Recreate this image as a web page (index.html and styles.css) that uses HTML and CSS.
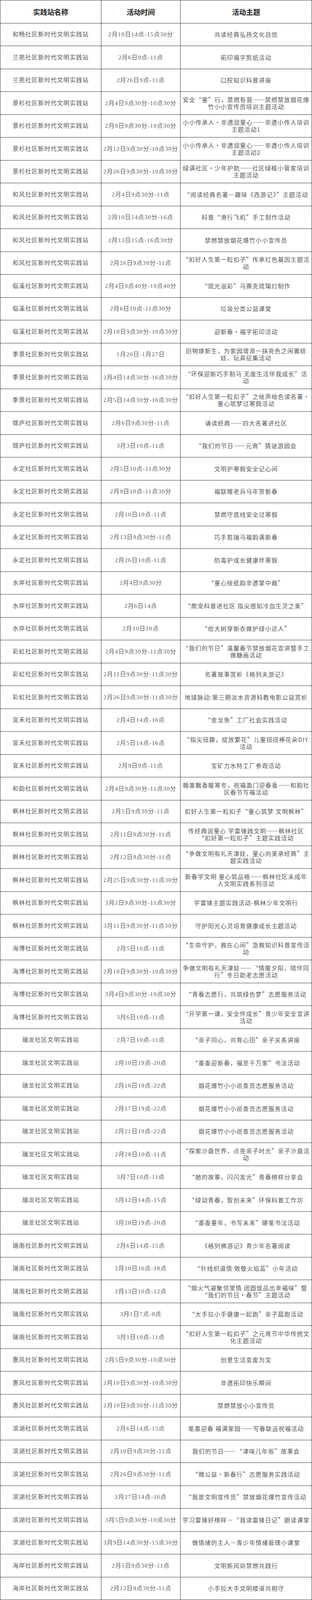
FILE: index.html
```html
<!DOCTYPE html>
<html lang="zh-CN">
<head>
<meta charset="utf-8">
<title>新时代文明实践站活动安排</title>
<link rel="stylesheet" href="styles.css">
</head>
<body>
<div class="schedule" role="table">
<div class="row" role="row"><div class="cell head" role="columnheader">实践站名称</div><div class="cell head" role="columnheader">活动时间</div><div class="cell head" role="columnheader">活动主题</div></div>
<div class="row" role="row"><div class="cell name" role="cell">和畅社区新时代文明实践站</div><div class="cell time" role="cell">2月10日14点-15点30分</div><div class="cell topic" role="cell">共读经典弘扬文化自信</div></div>
<div class="row" role="row"><div class="cell name" role="cell">兰苑社区新时代文明实践站</div><div class="cell time" role="cell">2月6日9点-11点</div><div class="cell topic" role="cell">拓印福字剪纸活动</div></div>
<div class="row" role="row"><div class="cell name" role="cell">兰苑社区新时代文明实践站</div><div class="cell time" role="cell">2月26日9点-11点</div><div class="cell topic" role="cell">口腔知识科普讲座</div></div>
<div class="row" role="row"><div class="cell name" role="cell">景杉社区新时代文明实践站</div><div class="cell time" role="cell">2月4日9点30分-10点30分</div><div class="cell topic" role="cell">安全“童”行，禁燃有我——禁燃禁放烟花爆竹小小宣传员培训主题活动</div></div>
<div class="row" role="row"><div class="cell name" role="cell">景杉社区新时代文明实践站</div><div class="cell time" role="cell">2月9日9点30分-10点30分</div><div class="cell topic" role="cell">小小传承人·非遗润童心——非遗小传人培训主题活动1</div></div>
<div class="row" role="row"><div class="cell name" role="cell">景杉社区新时代文明实践站</div><div class="cell time" role="cell">2月12日9点30分-10点30分</div><div class="cell topic" role="cell">小小传承人·非遗润童心——非遗小传人培训主题活动2</div></div>
<div class="row" role="row"><div class="cell name" role="cell">景杉社区新时代文明实践站</div><div class="cell time" role="cell">2月26日9点30分-10点30分</div><div class="cell topic" role="cell">绿满社区·少年护航——社区绿植小管家培训主题活动</div></div>
<div class="row" role="row"><div class="cell name" role="cell">和风社区新时代文明实践站</div><div class="cell time" role="cell">2月4日9点30分-11点</div><div class="cell topic" role="cell">“阅读经典名著—趣味《西游记》”主题活动</div></div>
<div class="row" role="row"><div class="cell name" role="cell">和风社区新时代文明实践站</div><div class="cell time" role="cell">2月10日14点30分-16点</div><div class="cell topic" role="cell">科普“滑行飞机”手工制作活动</div></div>
<div class="row" role="row"><div class="cell name" role="cell">和风社区新时代文明实践站</div><div class="cell time" role="cell">2月13日15点-16点30分</div><div class="cell topic" role="cell">禁燃禁放烟花爆竹小小宣传员</div></div>
<div class="row" role="row"><div class="cell name" role="cell">和风社区新时代文明实践站</div><div class="cell time" role="cell">2月26日9点30分-11点</div><div class="cell topic" role="cell">“扣好人生第一粒扣子”传承红色基因主题活动</div></div>
<div class="row" role="row"><div class="cell name" role="cell">临溪社区新时代文明实践站</div><div class="cell time" role="cell">2月4日9点40分-10点40分</div><div class="cell topic" role="cell">“琉光溢彩”马赛克琉璃灯制作</div></div>
<div class="row" role="row"><div class="cell name" role="cell">临溪社区新时代文明实践站</div><div class="cell time" role="cell">2月6日10点-11点30分</div><div class="cell topic" role="cell">垃圾分类公益课堂</div></div>
<div class="row" role="row"><div class="cell name" role="cell">临溪社区新时代文明实践站</div><div class="cell time" role="cell">2月10日9点30分-10点30分</div><div class="cell topic" role="cell">迎新春·福字拓印活动</div></div>
<div class="row" role="row"><div class="cell name" role="cell">季景社区新时代文明实践站</div><div class="cell time" role="cell">1月20日-1月27日</div><div class="cell topic" role="cell">旧物焕新生，为家园增添一抹亮色之闲置娃娃、玩具征集活动</div></div>
<div class="row" role="row"><div class="cell name" role="cell">季景社区新时代文明实践站</div><div class="cell time" role="cell">2月4日14点30分-16点30分</div><div class="cell topic" role="cell">“环保迎新巧手制马 无废生活伴我成长”活动</div></div>
<div class="row" role="row"><div class="cell name" role="cell">季景社区新时代文明实践站</div><div class="cell time" role="cell">2月5日14点30分-16点30分</div><div class="cell topic" role="cell">“扣好人生第一粒扣子”之绘声绘色读名著·童心筑梦过寒假活动</div></div>
<div class="row" role="row"><div class="cell name" role="cell">锦庐社区新时代文明实践站</div><div class="cell time" role="cell">2月6日9点30分-11点</div><div class="cell topic" role="cell">诵读经典——四大名著进社区</div></div>
<div class="row" role="row"><div class="cell name" role="cell">锦庐社区新时代文明实践站</div><div class="cell time" role="cell">3月3日10点-11点</div><div class="cell topic" role="cell">“我们的节日——元宵”猜谜游园会</div></div>
<div class="row" role="row"><div class="cell name" role="cell">永定社区新时代文明实践站</div><div class="cell time" role="cell">2月5日10点-11点30分</div><div class="cell topic" role="cell">文明护寒假安全记心间</div></div>
<div class="row" role="row"><div class="cell name" role="cell">永定社区新时代文明实践站</div><div class="cell time" role="cell">2月9日10点-11点30分</div><div class="cell topic" role="cell">福联赠老兵马年贺新春</div></div>
<div class="row" role="row"><div class="cell name" role="cell">永定社区新时代文明实践站</div><div class="cell time" role="cell">2月10日10点-11点</div><div class="cell topic" role="cell">禁燃守底线安全过寒假</div></div>
<div class="row" role="row"><div class="cell name" role="cell">永定社区新时代文明实践站</div><div class="cell time" role="cell">2月13日9点30分-11点</div><div class="cell topic" role="cell">巧手剪瑞马福韵满新春</div></div>
<div class="row" role="row"><div class="cell name" role="cell">永定社区新时代文明实践站</div><div class="cell time" role="cell">2月26日10点-11点</div><div class="cell topic" role="cell">防毒护成长健康伴寒假</div></div>
<div class="row" role="row"><div class="cell name" role="cell">水岸社区新时代文明实践站</div><div class="cell time" role="cell">2月4日9点30分</div><div class="cell topic" role="cell">“童心绘纸韵非遗掌中裁”</div></div>
<div class="row" role="row"><div class="cell name" role="cell">水岸社区新时代文明实践站</div><div class="cell time" role="cell">2月6日14点</div><div class="cell topic" role="cell">“爬宠科普进社区 指尖感知冷血生灵之美”</div></div>
<div class="row" role="row"><div class="cell name" role="cell">水岸社区新时代文明实践站</div><div class="cell time" role="cell">2月10日10点</div><div class="cell topic" role="cell">“给大树穿新衣做护绿小达人”</div></div>
<div class="row" role="row"><div class="cell name" role="cell">彩虹社区新时代文明实践站</div><div class="cell time" role="cell">2月4日9点30分-11点30分</div><div class="cell topic" role="cell">“我们的节日”温馨春节禁放烟花宣讲暨手工做糖画活动</div></div>
<div class="row" role="row"><div class="cell name" role="cell">彩虹社区新时代文明实践站</div><div class="cell time" role="cell">2月11日9点30分-11点30分</div><div class="cell topic" role="cell">名著故事赏析《格列夫游记》</div></div>
<div class="row" role="row"><div class="cell name" role="cell">彩虹社区新时代文明实践站</div><div class="cell time" role="cell">2月26日9点30分-11点30分</div><div class="cell topic" role="cell">地球脉动:第三期淡水资源科教电影公益赏析</div></div>
<div class="row" role="row"><div class="cell name" role="cell">宜禾社区新时代文明实践站</div><div class="cell time" role="cell">2月4日14点-16点</div><div class="cell topic" role="cell">“金龙鱼”工厂社会实践活动</div></div>
<div class="row" role="row"><div class="cell name" role="cell">宜禾社区新时代文明实践站</div><div class="cell time" role="cell">2月5日14点-16点</div><div class="cell topic" role="cell">“指尖扭趣，绽放繁花”儿童扭扭棒花朵DIY活动</div></div>
<div class="row" role="row"><div class="cell name" role="cell">宜禾社区新时代文明实践站</div><div class="cell time" role="cell">2月9日9点-11点</div><div class="cell topic" role="cell">宝矿力水特工厂参观活动</div></div>
<div class="row" role="row"><div class="cell name" role="cell">和韵社区新时代文明实践站</div><div class="cell time" role="cell">2月4日9点30分-11点30分</div><div class="cell topic" role="cell">翰墨飘香暖寒冬，祝福盈门迎春香——和韵社区春节写福活动</div></div>
<div class="row" role="row"><div class="cell name" role="cell">枫林社区新时代文明实践站</div><div class="cell time" role="cell">2月5日9点30分-11点</div><div class="cell topic" role="cell">扣好人生第一粒扣子“童心筑梦 文明枫林”</div></div>
<div class="row" role="row"><div class="cell name" role="cell">枫林社区新时代文明实践站</div><div class="cell time" role="cell">2月11日9点30分-11点</div><div class="cell topic" role="cell">传经典润童心 学雷锋践文明——枫林社区“扣好第一粒扣子”主题实践活动</div></div>
<div class="row" role="row"><div class="cell name" role="cell">枫林社区新时代文明实践站</div><div class="cell time" role="cell">2月12日9点30分-11点</div><div class="cell topic" role="cell">“争做文明有礼天津娃，童心向美承经典”主题实践活动</div></div>
<div class="row" role="row"><div class="cell name" role="cell">枫林社区新时代文明实践站</div><div class="cell time" role="cell">2月25日9点30分-11点30分</div><div class="cell topic" role="cell">新春学文明 童心筑品格——枫林社区未成年人文明实践系列活动</div></div>
<div class="row" role="row"><div class="cell name" role="cell">枫林社区新时代文明实践站</div><div class="cell time" role="cell">3月2日9点30分-11点30分</div><div class="cell topic" role="cell">学雷锋主题实践活动-枫林少年文明行</div></div>
<div class="row" role="row"><div class="cell name" role="cell">枫林社区新时代文明实践站</div><div class="cell time" role="cell">3月11日9点30分-11点30分</div><div class="cell topic" role="cell">守护阳光心灵培育健康成长主题活动</div></div>
<div class="row" role="row"><div class="cell name" role="cell">海博社区新时代文明实践站</div><div class="cell time" role="cell">2月5日10点-11点</div><div class="cell topic" role="cell">“生命守护，救在心间”急救知识科普宣传活动</div></div>
<div class="row" role="row"><div class="cell name" role="cell">海博社区新时代文明实践站</div><div class="cell time" role="cell">2月10日9点30分-10点30分</div><div class="cell topic" role="cell">争做文明有礼天津娃——“情暖夕阳，陪伴同行”冬日助老志愿活动</div></div>
<div class="row" role="row"><div class="cell name" role="cell">海博社区新时代文明实践站</div><div class="cell time" role="cell">3月4日9点30分-10点30分</div><div class="cell topic" role="cell">“青春志愿行，共筑绿色梦”志愿服务活动</div></div>
<div class="row" role="row"><div class="cell name" role="cell">海博社区新时代文明实践站</div><div class="cell time" role="cell">3月6日10点-11点</div><div class="cell topic" role="cell">“开学第一课，安全伴成长”青少年安全宣讲活动</div></div>
<div class="row" role="row"><div class="cell name" role="cell">瑞龙社区文明实践站</div><div class="cell time" role="cell">2月7日10点-11点</div><div class="cell topic" role="cell">“亲子同心，共育心田”亲子关系讲座</div></div>
<div class="row" role="row"><div class="cell name" role="cell">瑞龙社区文明实践站</div><div class="cell time" role="cell">2月10日19点-20点</div><div class="cell topic" role="cell">“墨香迎新春，福至千万家”书法活动</div></div>
<div class="row" role="row"><div class="cell name" role="cell">瑞龙社区文明实践站</div><div class="cell time" role="cell">2月16日19点-22点</div><div class="cell topic" role="cell">烟花爆竹小小巡查员志愿服务活动</div></div>
<div class="row" role="row"><div class="cell name" role="cell">瑞龙社区文明实践站</div><div class="cell time" role="cell">2月17日19点-22点</div><div class="cell topic" role="cell">烟花爆竹小小巡查员志愿服务活动</div></div>
<div class="row" role="row"><div class="cell name" role="cell">瑞龙社区文明实践站</div><div class="cell time" role="cell">2月21日19点-22点</div><div class="cell topic" role="cell">烟花爆竹小小巡查员志愿服务活动</div></div>
<div class="row" role="row"><div class="cell name" role="cell">瑞龙社区文明实践站</div><div class="cell time" role="cell">2月28日10点-11点</div><div class="cell topic" role="cell">“探索沙盘世界，点亮亲子时光”亲子沙盘活动</div></div>
<div class="row" role="row"><div class="cell name" role="cell">瑞龙社区文明实践站</div><div class="cell time" role="cell">3月7日10点-11点</div><div class="cell topic" role="cell">“她的故事，闪闪发光”青春榜样分享会</div></div>
<div class="row" role="row"><div class="cell name" role="cell">瑞龙社区文明实践站</div><div class="cell time" role="cell">3月12日14点-15点</div><div class="cell topic" role="cell">“绿动青春，智创未来”环保科普工作坊</div></div>
<div class="row" role="row"><div class="cell name" role="cell">瑞龙社区文明实践站</div><div class="cell time" role="cell">3月28日19点-20点</div><div class="cell topic" role="cell">“墨香童年，书写未来”硬笔书法活动</div></div>
<div class="row" role="row"><div class="cell name" role="cell">瑞南社区新时代文明实践站</div><div class="cell time" role="cell">2月6日14点-15点</div><div class="cell topic" role="cell">《格列佛游记》青少年名著阅读</div></div>
<div class="row" role="row"><div class="cell name" role="cell">瑞南社区新时代文明实践站</div><div class="cell time" role="cell">2月10日16点-18点</div><div class="cell topic" role="cell">“针线织温情 致敬火焰蓝”小年活动</div></div>
<div class="row" role="row"><div class="cell name" role="cell">瑞南社区新时代文明实践站</div><div class="cell time" role="cell">2月13日10点-12点</div><div class="cell topic" role="cell">“烟火气凝聚邻里情 团圆饭品出幸福味”暨“我们的节日·春节”主题活动</div></div>
<div class="row" role="row"><div class="cell name" role="cell">瑞南社区新时代文明实践站</div><div class="cell time" role="cell">3月1日7点-8点</div><div class="cell topic" role="cell">“大手拉小手健康一起跑”亲子晨跑活动</div></div>
<div class="row" role="row"><div class="cell name" role="cell">瑞南社区新时代文明实践站</div><div class="cell time" role="cell">3月1日10点-11点</div><div class="cell topic" role="cell">“扣好人生第一粒扣子”之元宵节中华传统文化主题活动</div></div>
<div class="row" role="row"><div class="cell name" role="cell">惠风社区新时代文明实践站</div><div class="cell time" role="cell">2月5日9点30分-10点30分</div><div class="cell topic" role="cell">创意生活变废为宝</div></div>
<div class="row" role="row"><div class="cell name" role="cell">惠风社区新时代文明实践站</div><div class="cell time" role="cell">2月10日9点30分-10点30分</div><div class="cell topic" role="cell">非遗拓印快乐瞬间</div></div>
<div class="row" role="row"><div class="cell name" role="cell">惠风社区新时代文明实践站</div><div class="cell time" role="cell">2月10日9点30分-11点30分</div><div class="cell topic" role="cell">禁燃禁放小小宣传员</div></div>
<div class="row" role="row"><div class="cell name" role="cell">滨湖社区新时代文明实践站</div><div class="cell time" role="cell">2月6日14点-15点</div><div class="cell topic" role="cell">笔墨迎春 福满家园——写春联送祝福活动</div></div>
<div class="row" role="row"><div class="cell name" role="cell">滨湖社区新时代文明实践站</div><div class="cell time" role="cell">2月10日9点30分-11点</div><div class="cell topic" role="cell">我们的节日——“津味儿年俗”故事会</div></div>
<div class="row" role="row"><div class="cell name" role="cell">滨湖社区新时代文明实践站</div><div class="cell time" role="cell">2月26日9点30分-11点</div><div class="cell topic" role="cell">“微公益·新春行”志愿服务实践活动</div></div>
<div class="row" role="row"><div class="cell name" role="cell">滨湖社区新时代文明实践站</div><div class="cell time" role="cell">2月27日14点-16点</div><div class="cell topic" role="cell">“我是文明宣传员”禁放烟花爆竹宣传活动</div></div>
<div class="row" role="row"><div class="cell name" role="cell">滨湖社区新时代文明实践站</div><div class="cell time" role="cell">3月5日9点30分-10点30分</div><div class="cell topic" role="cell">学习雷锋好榜样—“我读雷锋日记”朗读课堂</div></div>
<div class="row" role="row"><div class="cell name" role="cell">滨湖社区新时代文明实践站</div><div class="cell time" role="cell">3月9日14点30分-15点30分</div><div class="cell topic" role="cell">做情绪的主人—青少年情绪管理小课堂</div></div>
<div class="row" role="row"><div class="cell name" role="cell">海岸社区新时代文明实践站</div><div class="cell time" role="cell">2月5日9点30分-11点</div><div class="cell topic" role="cell">文明新风尚禁燃共践行</div></div>
<div class="row" role="row"><div class="cell name" role="cell">海岸社区新时代文明实践站</div><div class="cell time" role="cell">2月12日9点30分-11点</div><div class="cell topic" role="cell">小手拉大手文明楼道共相守</div></div>
</div>
</body>
</html>
```
FILE: styles.css
```css
html, body {
  margin: 0;
  padding: 0;
  background: #ffffff;
}

/* The capture window is 4096px tall, so the 70 rows share that height evenly. */
.schedule {
  display: grid;
  grid-template-columns: 259px 203px 337px;
  grid-auto-rows: 58.5px;
  width: 800px;
  box-sizing: border-box;
  border-top: 1px solid #363636;
  border-left: 1px solid #363636;
  font-family: "Liberation Serif", "Noto Sans CJK SC", serif;
}

.row {
  display: contents;
}

.cell {
  display: flex;
  align-items: center;
  justify-content: center;
  box-sizing: border-box;
  min-width: 0;
  overflow: hidden;
  border-right: 1px solid #363636;
  border-bottom: 1px solid #363636;
  padding: 0 5px;
  text-align: center;
  font-size: 15px;
  line-height: 18px;
  letter-spacing: 1.3px;
  color: #555555;
}

.head {
  font-family: "Noto Sans CJK SC", sans-serif;
  font-size: 18px;
  font-weight: bold;
  letter-spacing: 0;
  color: #1e1e1e;
}

.time {
  padding: 0 3px;
}

.topic {
  font-family: "Noto Sans CJK SC", "Liberation Serif", sans-serif;
}
```
